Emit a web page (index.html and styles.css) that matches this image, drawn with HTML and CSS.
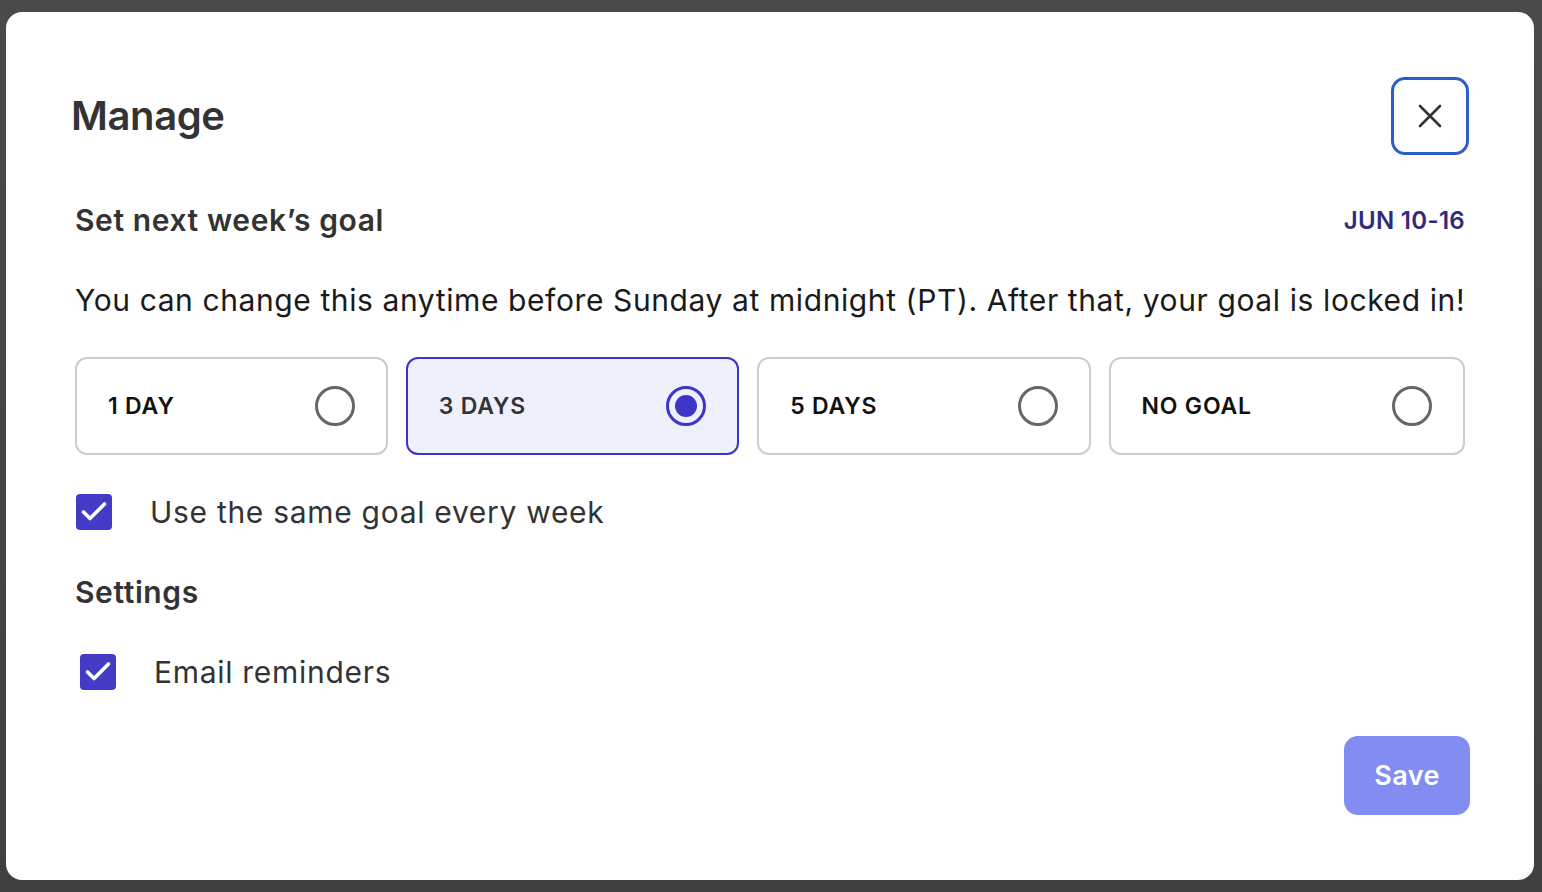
FILE: index.html
```html
<!DOCTYPE html>
<html lang="en">
<head>
<meta charset="utf-8">
<title>Manage</title>
<link rel="stylesheet" href="styles.css">
</head>
<body>
<div class="backdrop">
  <div class="modal">
    <div class="modal-header">
      <h1 class="title">Manage</h1>
      <button class="close-btn" aria-label="Close">
        <svg width="26" height="26" viewBox="0 0 26 26"><path d="M3 3 L23 23 M23 3 L3 23" stroke="#333" stroke-width="2.6" stroke-linecap="round" fill="none"/></svg>
      </button>
    </div>

    <div class="goal-head">
      <h2 class="section-title">Set next week’s goal</h2>
      <span class="date-range">JUN 10-16</span>
    </div>

    <p class="desc">You can change this anytime before Sunday at midnight (PT). After that, your goal is locked in!</p>

    <div class="options">
      <label class="option">
        <span class="option-label">1 DAY</span>
        <span class="radio"></span>
      </label>
      <label class="option selected">
        <span class="option-label">3 DAYS</span>
        <span class="radio"><span class="dot"></span></span>
      </label>
      <label class="option">
        <span class="option-label">5 DAYS</span>
        <span class="radio"></span>
      </label>
      <label class="option">
        <span class="option-label">NO GOAL</span>
        <span class="radio"></span>
      </label>
    </div>

    <div class="check-row">
      <span class="checkbox">
        <svg width="36" height="36" viewBox="0 0 36 36"><path d="M7.5 18 L14 24.5 L28.5 10" stroke="#fff" stroke-width="3.6" stroke-linecap="round" stroke-linejoin="round" fill="none"/></svg>
      </span>
      <span class="check-label">Use the same goal every week</span>
    </div>

    <h2 class="section-title settings">Settings</h2>

    <div class="check-row email">
      <span class="checkbox">
        <svg width="36" height="36" viewBox="0 0 36 36"><path d="M7.5 18 L14 24.5 L28.5 10" stroke="#fff" stroke-width="3.6" stroke-linecap="round" stroke-linejoin="round" fill="none"/></svg>
      </span>
      <span class="check-label">Email reminders</span>
    </div>

    <div class="footer">
      <button class="save-btn">Save</button>
    </div>
  </div>
</div>
</body>
</html>
```

FILE: styles.css
```css
* { box-sizing: border-box; }
html, body {
  margin: 0;
  padding: 0;
  height: 100%;
}
body {
  background: #454545;
  font-family: Inter, "Noto Sans", "Liberation Sans", sans-serif;
  color: #333;
  overflow: hidden;
}
.backdrop {
  width: 1542px;
  height: 892px;
  padding: 12px 8px 12px 6px;
  background: linear-gradient(#4a4a4a, #404040);
}
.modal {
  width: 1528px;
  height: 868px;
  background: #fff;
  border-radius: 16px;
  padding: 65px 69px 0 69px;
  display: flex;
  flex-direction: column;
}
.modal-header {
  display: flex;
  justify-content: space-between;
  align-items: center;
  height: 78px;
  margin-right: -4px;
}
.title {
  margin: 0 0 0 -4px;
  font-size: 40px;
  font-weight: 600;
  color: #333;
  line-height: 48px;
  letter-spacing: -0.4px;
}
.close-btn {
  width: 78px;
  height: 78px;
  border: 3px solid #2b5fc7;
  border-radius: 14px;
  background: #fff;
  display: flex;
  align-items: center;
  justify-content: center;
  padding: 0;
}
.goal-head {
  margin-top: 47px;
  display: flex;
  justify-content: space-between;
  align-items: center;
  height: 36px;
}
.section-title {
  margin: 0;
  font-size: 30px;
  line-height: 36px;
  font-weight: 600;
  color: #333;
  letter-spacing: 0.6px;
}
.date-range {
  font-size: 24px;
  font-weight: 600;
  color: #2e2b7c;
  letter-spacing: 0.3px;
}
.desc {
  margin: 42px 0 0 0;
  font-size: 30px;
  line-height: 40px;
  color: #1a1a1a;
  white-space: nowrap;
  letter-spacing: 0.6px;
}
.options {
  margin-top: 37px;
  display: flex;
  gap: 18px;
}
.option {
  flex: 1 1 auto;
  height: 98px;
  border: 2px solid #cccccc;
  border-radius: 12px;
  display: flex;
  align-items: center;
  justify-content: space-between;
  padding: 0 31px 0 31px;
  background: #fff;
}
.option.selected {
  border-color: #3d33c4;
  background: #eef0fc;
}
.option-label {
  font-size: 23px;
  font-weight: 600;
  color: #111;
  letter-spacing: 0.8px;
  margin-right: 40px;
}
.option.selected .option-label {
  color: #333;
}
.radio {
  width: 40px;
  height: 40px;
  border-radius: 50%;
  border: 3.5px solid #666;
  display: flex;
  align-items: center;
  justify-content: center;
  flex: none;
}
.option.selected .radio {
  border-color: #3d35c9;
}
.dot {
  width: 22px;
  height: 22px;
  border-radius: 50%;
  background: #3d35c9;
}
.check-row {
  margin-top: 39px;
  display: flex;
  align-items: center;
  height: 36px;
  margin-left: 1px;
}
.checkbox {
  width: 36px;
  height: 36px;
  border-radius: 4px;
  background: #433bc6;
  display: flex;
  flex: none;
}
.check-label {
  margin-left: 38px;
  font-size: 30px;
  color: #333;
  line-height: 36px;
  letter-spacing: 0.7px;
}
.settings {
  margin-top: 44px;
}
.check-row.email {
  margin-top: 44px;
  margin-left: 5px;
}
.footer {
  margin-top: 46px;
  display: flex;
  justify-content: flex-end;
  margin-right: -5px;
}
.save-btn {
  width: 126px;
  height: 79px;
  border: none;
  border-radius: 14px;
  background: #838cf1;
  color: #fff;
  font-family: Inter, "Noto Sans", sans-serif;
  font-size: 27px;
  font-weight: 600;
  padding: 0;
  letter-spacing: 0.4px;
}
```
